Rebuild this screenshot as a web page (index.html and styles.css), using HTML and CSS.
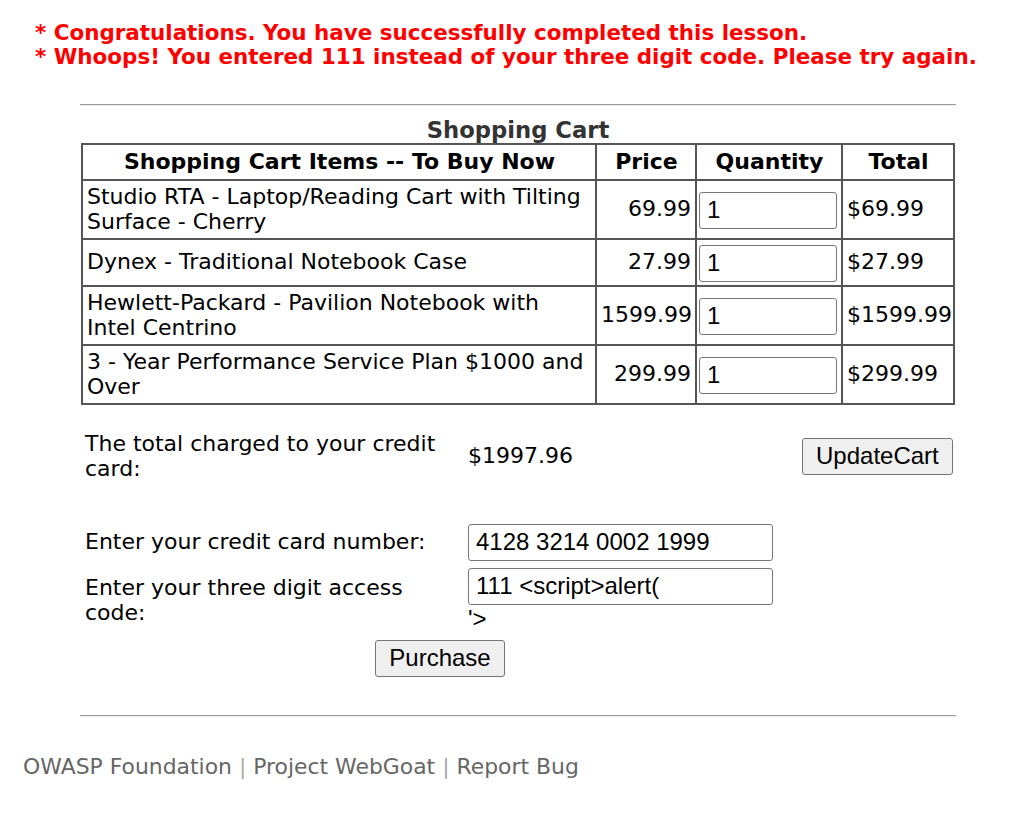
FILE: index.html
```html
<!DOCTYPE html>
<html>
<head>
<meta charset="utf-8">
<title>Shopping Cart</title>
<link rel="stylesheet" href="styles.css">
</head>
<body>
<div class="messages">
  <div class="msg">* Congratulations. You have successfully completed this lesson.</div>
  <div class="msg">* Whoops! You entered 111 instead of your three digit code. Please try again.</div>
</div>
<div class="lesson">
  <hr class="rule rule-top">
  <table class="cart">
    <caption>Shopping Cart</caption>
    <colgroup>
      <col class="col-item"><col class="col-price"><col class="col-qty"><col class="col-total">
    </colgroup>
    <thead>
      <tr><th>Shopping Cart Items -- To Buy Now</th><th>Price</th><th>Quantity</th><th>Total</th></tr>
    </thead>
    <tbody>
      <tr><td>Studio RTA - Laptop/Reading Cart with Tilting Surface - Cherry</td><td class="num">69.99</td><td class="qty-cell"><input class="qty" type="text" value="1"></td><td>$69.99</td></tr>
      <tr><td>Dynex - Traditional Notebook Case</td><td class="num">27.99</td><td class="qty-cell"><input class="qty" type="text" value="1"></td><td>$27.99</td></tr>
      <tr><td>Hewlett-Packard - Pavilion Notebook with Intel Centrino</td><td class="num">1599.99</td><td class="qty-cell"><input class="qty" type="text" value="1"></td><td>$1599.99</td></tr>
      <tr><td>3 - Year Performance Service Plan $1000 and Over</td><td class="num">299.99</td><td class="qty-cell"><input class="qty" type="text" value="1"></td><td>$299.99</td></tr>
    </tbody>
  </table>
  <div class="spacer"></div>
  <table class="checkout">
    <colgroup>
      <col class="col-label"><col class="col-field"><col class="col-action">
    </colgroup>
    <tr class="row-total">
      <td>The total charged to your credit card:</td>
      <td>$1997.96</td>
      <td class="right"><button class="btn" type="button">UpdateCart</button></td>
    </tr>
    <tr class="row-empty"><td>&nbsp;</td><td></td><td></td></tr>
    <tr class="row-card">
      <td>Enter your credit card number:</td>
      <td><input class="field" type="text" value="4128 3214 0002 1999"></td>
      <td></td>
    </tr>
    <tr class="row-code">
      <td>Enter your three digit access code:</td>
      <td class="field-cell"><input class="field" type="text" value="111 &lt;script&gt;alert("><span class="leak">'&gt;</span></td>
      <td></td>
    </tr>
    <tr class="row-buy">
      <td colspan="2" class="center"><button class="btn" type="button">Purchase</button></td>
      <td></td>
    </tr>
  </table>
  <hr class="rule rule-bottom">
</div>
<div class="footer">
  <span class="link">OWASP Foundation</span> <span class="sep">|</span> <span class="link">Project WebGoat</span> <span class="sep">|</span> <span class="link">Report Bug</span>
</div>
</body>
</html>
```

FILE: styles.css
```css
html, body {
  margin: 0;
  padding: 0;
  background: #ffffff;
}

body {
  font-family: "DejaVu Sans", Verdana, sans-serif;
  font-size: 22px;
  color: #000000;
}

.messages {
  padding: 21px 0 0 35px;
}

.msg {
  color: #ff0000;
  font-weight: bold;
  font-size: 21.45px;
  line-height: 24px;
  white-space: nowrap;
}

.lesson {
  width: 876px;
  margin-left: 80px;
}

.rule {
  display: block;
  height: 0;
  border: 0;
  border-top: 1px solid #9a9a9a;
  border-bottom: 1px solid #eeeeee;
  margin: 0;
}

.rule-top {
  margin-top: 35px;
}

.cart {
  width: 872px;
  margin-left: 1px;
  border-collapse: collapse;
  table-layout: fixed;
  margin-top: 11px;
}

.cart caption {
  font-weight: bold;
  font-size: 22.7px;
  color: #333333;
  line-height: 26px;
}

.col-item { width: 514px; }
.col-price { width: 100px; }
.col-qty { width: 146px; }
.col-total { width: 112px; }

.cart th,
.cart td {
  border: 2px solid #555555;
  padding: 3px 3px 3px 4px;
  line-height: 25.5px;
}

.cart th {
  font-weight: bold;
  text-align: center;
  padding-top: 4px;
  padding-bottom: 4px;
}

.cart td.num {
  text-align: right;
  padding-right: 4px;
}

.cart td.qty-cell {
  padding: 2px;
}

input.qty,
input.field {
  box-sizing: border-box;
  height: 37px;
  border: 1px solid #767676;
  border-radius: 3px;
  padding: 0 7px;
  font-family: "Liberation Sans", Arial, sans-serif;
  font-size: 24px;
  color: #000000;
  background: #ffffff;
  margin: 0;
  vertical-align: baseline;
}

input.qty {
  width: 138px;
  margin-top: 3px;
  margin-bottom: 1px;
}

input.field {
  width: 305px;
}

.spacer {
  height: 24px;
}

.checkout {
  width: 874px;
  margin-left: 1px;
  border-collapse: collapse;
  table-layout: fixed;
}

.col-label { width: 383px; }
.col-field { width: 334px; }
.col-action { width: 157px; }

.checkout td {
  padding: 2px 3px 2px 4px;
  line-height: 25.5px;
  vertical-align: middle;
}

.checkout td.right {
  text-align: right;
}

.checkout td.center {
  text-align: center;
}

.row-empty td {
  height: 34px;
}

.row-code td {
  padding-top: 5px;
}

.leak {
  display: block;
  font-family: "Liberation Sans", Arial, sans-serif;
  font-size: 24px;
  line-height: 28px;
}

.row-buy td {
  padding-top: 5px;
}

.btn {
  box-sizing: border-box;
  height: 37px;
  padding: 0 13px;
  border: 1px solid #767676;
  border-radius: 3px;
  background: #efefef;
  font-family: "Liberation Sans", Arial, sans-serif;
  font-size: 24px;
  color: #000000;
  margin: 0;
}

.rule-bottom {
  margin-top: 36px;
}

.footer {
  padding: 37px 0 0 23px;
  font-family: "DejaVu Sans", sans-serif;
  font-size: 21.9px;
  color: #666666;
}

.footer .sep {
  color: #aaaaaa;
}
```
